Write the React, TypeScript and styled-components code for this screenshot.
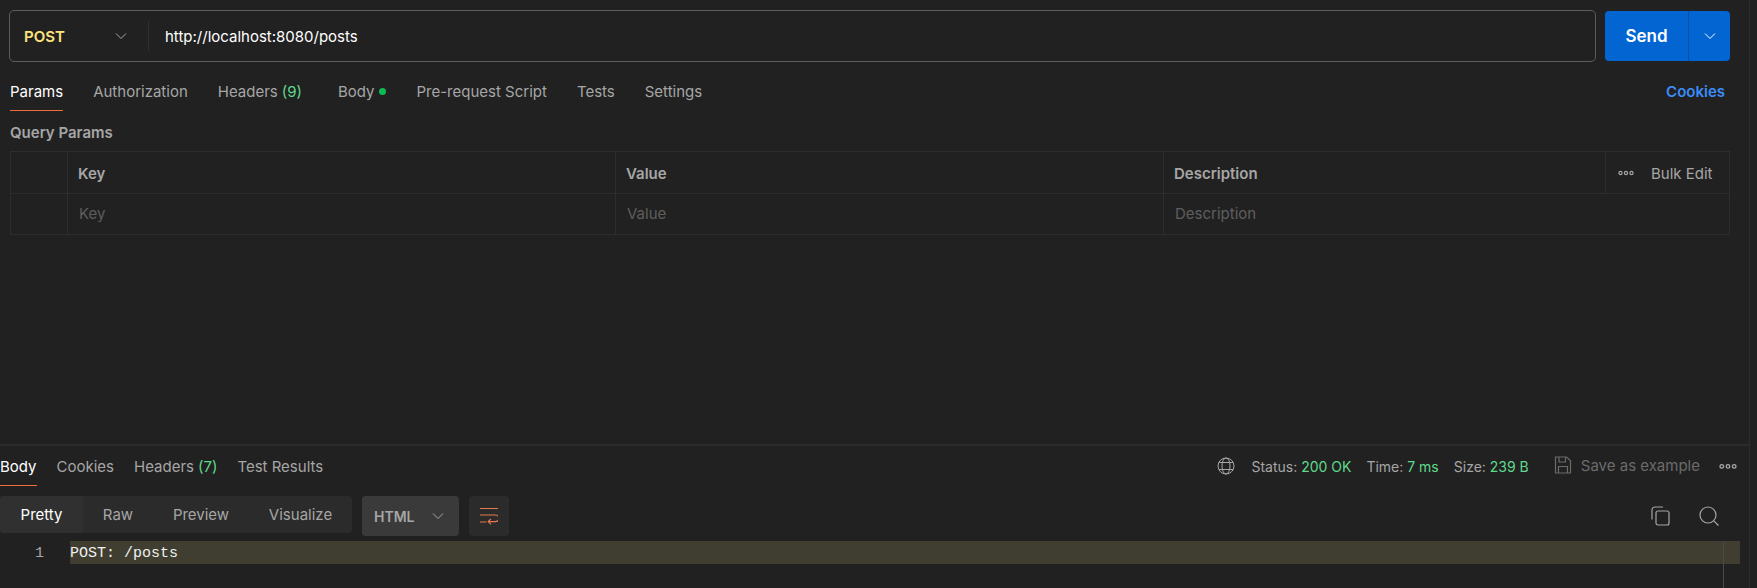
import React from 'react'
import styled, { createGlobalStyle } from 'styled-components'

const GlobalStyle = createGlobalStyle`
  html, body {
    margin: 0;
    padding: 0;
    background: #212121;
  }
  * { box-sizing: border-box; }
`

const Chevron = ({ color = '#a6a6a6' }: { color?: string }) => (
  <svg width="12" height="12" viewBox="0 0 12 12" fill="none">
    <path d="M1 3.5 6 8.5l5-5" stroke={color} strokeWidth="1" />
  </svg>
)

const Dots = ({ width = 16 }: { width?: number }) => (
  <svg width={width} height={(width * 6) / 16} viewBox="0 0 16 6" fill="none" stroke="#a6a6a6" strokeWidth="1.2">
    <circle cx="2.5" cy="3" r="1.6" />
    <circle cx="8" cy="3" r="1.6" />
    <circle cx="13.5" cy="3" r="1.6" />
  </svg>
)

const App: React.FC = () => {
  return (
    <>
      <GlobalStyle />
      <Page>
        <RequestPane>
          <UrlRow>
            <UrlBar>
              <MethodSelect>
                <MethodName>POST</MethodName>
                <Chevron />
              </MethodSelect>
              <UrlText>http://localhost:8080/posts</UrlText>
            </UrlBar>
            <SendGroup>
              <SendButton>Send</SendButton>
              <SendArrow>
                <Chevron color="#ffffff" />
              </SendArrow>
            </SendGroup>
          </UrlRow>

          <RequestTabs>
            <Tab $active>Params</Tab>
            <Tab>Authorization</Tab>
            <Tab>
              Headers <RequestCount>(9)</RequestCount>
            </Tab>
            <Tab>
              Body <GreenDot />
            </Tab>
            <Tab>Pre-request Script</Tab>
            <Tab>Tests</Tab>
            <Tab>Settings</Tab>
            <CookiesLink>Cookies</CookiesLink>
          </RequestTabs>

          <SectionTitle>Query Params</SectionTitle>

          <ParamsTable>
            <ParamsRow $height={42}>
              <CheckCell />
              <HeadCell>Key</HeadCell>
              <HeadCell>Value</HeadCell>
              <HeadCell>Description</HeadCell>
              <ActionsCell>
                <Dots />
                <BulkEdit>Bulk Edit</BulkEdit>
              </ActionsCell>
            </ParamsRow>
            <ParamsRow $height={40} $last>
              <CheckCell />
              <PlaceholderCell>Key</PlaceholderCell>
              <PlaceholderCell>Value</PlaceholderCell>
              <PlaceholderCell $wide>Description</PlaceholderCell>
            </ParamsRow>
          </ParamsTable>
        </RequestPane>

        <ResponsePane>
          <ResponseTabs>
            <ResponseTab $active>Body</ResponseTab>
            <ResponseTab>Cookies</ResponseTab>
            <ResponseTab>
              Headers <Count>(7)</Count>
            </ResponseTab>
            <ResponseTab>Test Results</ResponseTab>
            <StatusBar>
              <svg width="18" height="18" viewBox="0 0 18 18" fill="none" stroke="#a6a6a6" strokeWidth="1">
                <circle cx="9" cy="9" r="8" />
                <ellipse cx="9" cy="9" rx="4" ry="8" />
                <path d="M2 5.5h14M2 12.5h14" />
              </svg>
              <StatusGroup>
                <Stat>
                  Status: <StatValue>200 OK</StatValue>
                </Stat>
                <Stat>
                  Time: <StatValue>7 ms</StatValue>
                </Stat>
                <Stat>
                  Size: <StatValue>239 B</StatValue>
                </Stat>
              </StatusGroup>
              <SaveExample>
                <svg width="18" height="18" viewBox="0 0 18 18" fill="none" stroke="#6b6b6b" strokeWidth="1.2">
                  <path d="M1.5 1h11.2L16.5 4.8v12.2h-15z" />
                  <path d="M5 1v5h6.5V1M4.5 17v-6.5h9V17" />
                </svg>
                <SaveText>Save as example</SaveText>
              </SaveExample>
              <Dots width={18} />
            </StatusBar>
          </ResponseTabs>

          <ViewerToolbar>
            <ModeGroup>
              <ModeItem $active>Pretty</ModeItem>
              <ModeItem>Raw</ModeItem>
              <ModeItem>Preview</ModeItem>
              <ModeItem>Visualize</ModeItem>
            </ModeGroup>
            <FormatSelect>
              <FormatName>HTML</FormatName>
              <Chevron />
            </FormatSelect>
            <WrapButton>
              <svg width="18" height="18" viewBox="0 0 18 18" fill="none" stroke="#e8794f" strokeWidth="1.2">
                <path d="M0 1.5h18M0 8h15.5a2.6 2.6 0 0 1 0 6.6H8.5M0 15h6.5M11 11.8l-2.8 2.8 2.8 2.8" />
              </svg>
            </WrapButton>
            <ToolIcons>
              <svg width="20" height="20" viewBox="0 0 20 20" fill="none" stroke="#a6a6a6" strokeWidth="1.2">
                <path d="M2 13.5V4a3 3 0 0 1 3-3h8" />
                <rect x="6" y="5" width="13" height="14" rx="2" />
              </svg>
              <svg width="20" height="20" viewBox="0 0 20 20" fill="none" stroke="#a6a6a6" strokeWidth="1.2">
                <circle cx="9" cy="9" r="8" />
                <path d="M14.8 14.8 19.5 19.5" />
              </svg>
            </ToolIcons>
          </ViewerToolbar>

          <CodeRow>
            <LineNumber>1</LineNumber>
            <CodeLine>POST: /posts</CodeLine>
          </CodeRow>
          <PrintMargin />
        </ResponsePane>
      </Page>
    </>
  )
}

export default App

const Page = styled.div`
  width: 1757px;
  height: 588px;
  overflow: hidden;
  position: relative;
  background: #212121;
  color: #a6a6a6;
  font-family: Inter, 'Liberation Sans', sans-serif;
  font-size: 15px;
`
const RequestPane = styled.div`
  width: 1750px;
  height: 446px;
  padding: 10px 19px 0 9px;
  border-right: 1px solid #2b2b2b;
  border-bottom: 2px solid #2b2b2b;
`
const UrlRow = styled.div`
  display: flex;
  align-items: center;
  gap: 9px;
  height: 52px;
`
const UrlBar = styled.div`
  flex: 1;
  height: 52px;
  display: flex;
  align-items: center;
  border: 1px solid #5c5c5c;
  border-radius: 5px;
`
const MethodSelect = styled.div`
  width: 139px;
  height: 30px;
  padding: 0 21px 0 14px;
  display: flex;
  align-items: center;
  justify-content: space-between;
  border-right: 1px solid #303030;
`
const MethodName = styled.span`
  color: #ffe47e;
  font-weight: 600;
`
const UrlText = styled.span`
  margin-left: 16px;
  color: #ffffff;
`
const SendGroup = styled.div`
  width: 125px;
  height: 50px;
  display: flex;
  border-radius: 4px;
  overflow: hidden;
  background: #0265d2;
`
const SendButton = styled.div`
  width: 84px;
  display: flex;
  align-items: center;
  justify-content: center;
  color: #ffffff;
  font-weight: 600;
  font-size: 17px;
  border-right: 1px solid #0b4f9e;
`
const SendArrow = styled.div`
  flex: 1;
  display: flex;
  align-items: center;
  justify-content: center;
`
const RequestTabs = styled.div`
  display: flex;
  align-items: center;
  gap: 30px;
  height: 49px;
  padding: 10px 5px 0 1px;
`
const Tab = styled.div<{ $active?: boolean }>`
  height: 39px;
  display: flex;
  align-items: center;
  gap: 4px;
  color: ${(p) => (p.$active ? '#ffffff' : '#a6a6a6')};
  box-shadow: ${(p) => (p.$active ? 'inset 0 -1px 0 #f26b3a' : 'none')};
`
const Count = styled.span`
  color: #5fd98c;
`
const RequestCount = styled(Count)`
  margin-right: 6px;
`
const GreenDot = styled.span`
  width: 7px;
  height: 7px;
  margin-left: 1px;
  border-radius: 50%;
  background: #0cbb52;
`
const CookiesLink = styled.div`
  margin-left: auto;
  color: #3b8cf8;
  font-weight: 600;
`
const SectionTitle = styled.div`
  margin: 13px 0 0 1px;
  height: 18px;
  line-height: 18px;
  font-weight: 600;
  color: #a6a6a6;
`
const ParamsTable = styled.div`
  margin: 9px 0 0 1px;
  border: 1px solid #2d2d2d;
`
const ParamsRow = styled.div<{ $height: number; $last?: boolean }>`
  display: grid;
  grid-template-columns: 57px 548px 548px 442px 1fr;
  height: ${(p) => p.$height}px;
  border-bottom: ${(p) => (p.$last ? 'none' : '1px solid #2d2d2d')};
`
const CheckCell = styled.div`
  border-right: 1px solid #2d2d2d;
`
const HeadCell = styled.div`
  display: flex;
  align-items: center;
  padding: 1px 0 0 10px;
  font-weight: 600;
  color: #a6a6a6;
  border-right: 1px solid #2d2d2d;
`
const ActionsCell = styled.div`
  display: flex;
  align-items: center;
  gap: 17px;
  padding: 1px 0 0 12px;
`
const BulkEdit = styled.span``
const PlaceholderCell = styled.div<{ $wide?: boolean }>`
  display: flex;
  align-items: center;
  padding: 0 0 2px 11px;
  color: #5e5e5e;
  grid-column: ${(p) => (p.$wide ? 'span 2' : 'auto')};
  border-right: ${(p) => (p.$wide ? 'none' : '1px solid #2d2d2d')};
`
const ResponsePane = styled.div`
  position: relative;
  width: 1750px;
  height: 142px;
  border-right: 1px solid #2b2b2b;
`
const ResponseTabs = styled.div`
  display: flex;
  align-items: center;
  gap: 20px;
  height: 40px;
  padding-right: 12px;
`
const ResponseTab = styled.div<{ $active?: boolean }>`
  height: 40px;
  display: flex;
  align-items: center;
  gap: 4px;
  color: ${(p) => (p.$active ? '#ffffff' : '#a6a6a6')};
  box-shadow: ${(p) => (p.$active ? 'inset 0 -1px 0 #f26b3a' : 'none')};
`
const StatusBar = styled.div`
  margin-left: auto;
  display: flex;
  align-items: center;
`
const StatusGroup = styled.div`
  display: flex;
  gap: 15px;
  margin-left: 16px;
`
const Stat = styled.span`
  font-size: 14px;
  color: #a6a6a6;
`
const StatValue = styled.span`
  color: #5fd98c;
`
const SaveExample = styled.div`
  display: flex;
  align-items: center;
  gap: 9px;
  margin: 0 19px 0 25px;
  padding-bottom: 2px;
`
const SaveText = styled.span`
  color: #6b6b6b;
`
const ViewerToolbar = styled.div`
  display: flex;
  align-items: flex-start;
  margin-top: 10px;
  height: 40px;
`
const ModeGroup = styled.div`
  display: grid;
  grid-template-columns: 83px 70px 96px 103px;
  height: 37px;
  border-radius: 4px;
  background: #2b2b2b;
  overflow: hidden;
`
const ModeItem = styled.div<{ $active?: boolean }>`
  display: flex;
  align-items: center;
  justify-content: center;
  color: ${(p) => (p.$active ? '#ffffff' : '#a6a6a6')};
  background: ${(p) => (p.$active ? '#303030' : 'transparent')};
`
const FormatSelect = styled.div`
  width: 97px;
  height: 40px;
  margin-left: 10px;
  padding: 0 15px 0 12px;
  display: flex;
  align-items: center;
  justify-content: space-between;
  border-radius: 4px;
  background: #3a3a3a;
`
const FormatName = styled.span`
  font-size: 14px;
  font-weight: 600;
  color: #a6a6a6;
`
const WrapButton = styled.div`
  width: 40px;
  height: 40px;
  margin-left: 10px;
  display: flex;
  align-items: center;
  justify-content: center;
  border-radius: 4px;
  background: #2b2b2b;
`
const ToolIcons = styled.div`
  margin-left: auto;
  display: flex;
  gap: 29px;
  padding: 10px 30px 0 0;
`
const CodeRow = styled.div`
  display: flex;
  align-items: flex-start;
  height: 23px;
  margin-top: 5px;
  padding-right: 9px;
  font-family: 'Liberation Mono', monospace;
  font-size: 15px;
  line-height: 26px;
`
const LineNumber = styled.div`
  width: 70px;
  padding-right: 26px;
  text-align: right;
  color: #a6a6a6;
`
const CodeLine = styled.div`
  flex: 1;
  height: 23px;
  color: #f0f0f0;
  background: #3f3e30;
`
const PrintMargin = styled.div`
  position: absolute;
  left: 1723px;
  top: 95px;
  bottom: 0;
  width: 1px;
  background: #4a4a4a;
`
